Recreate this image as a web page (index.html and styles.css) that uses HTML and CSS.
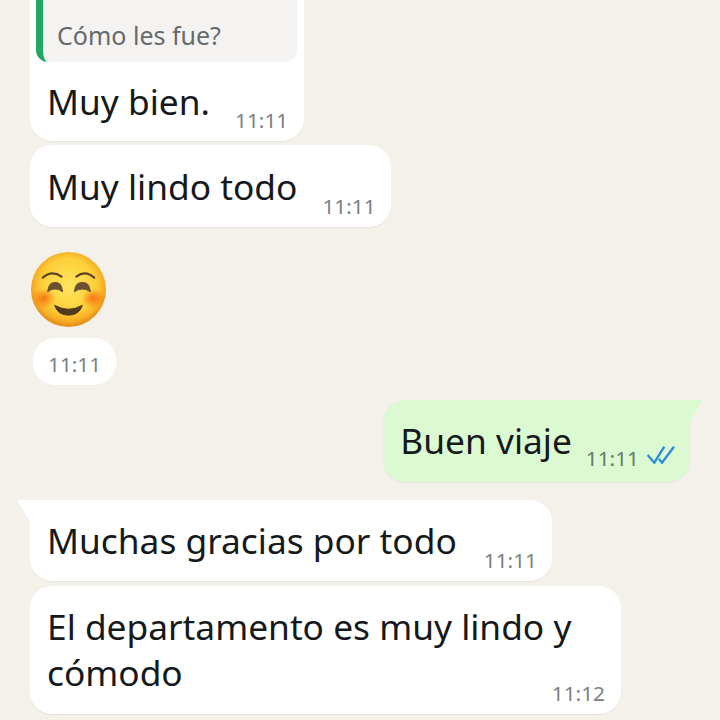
FILE: index.html
```html
<!DOCTYPE html>
<html lang="es">
<head>
  <meta charset="UTF-8">
  <title>Chat</title>
  <link rel="stylesheet" href="styles.css">
</head>
<body>

<div class="chat">

  <div class="msg in first">
    <div class="reply"><span class="reply-text">Cómo les fue?</span></div>
    <div class="row">
      <span class="text">Muy bien.</span>
      <span class="time">11:11</span>
    </div>
  </div>

  <div class="msg in next">
    <div class="row">
      <span class="text">Muy lindo todo</span>
      <span class="time">11:11</span>
    </div>
  </div>

  <svg class="emoji" width="77" height="77" viewBox="0 0 78 78">
    <defs>
      <radialGradient id="face" cx="50%" cy="45%" r="52%">
        <stop offset="0" stop-color="#ffe65e"/>
        <stop offset="0.7" stop-color="#fdcf38"/>
        <stop offset="0.92" stop-color="#f7ab24"/>
        <stop offset="1" stop-color="#e8941e"/>
      </radialGradient>
      <radialGradient id="blush">
        <stop offset="0" stop-color="#f8690f" stop-opacity="0.9"/>
        <stop offset="1" stop-color="#f8690f" stop-opacity="0"/>
      </radialGradient>
    </defs>
    <circle cx="39" cy="39" r="38" fill="url(#face)"/>
    <ellipse cx="14" cy="48" rx="12" ry="10" fill="url(#blush)"/>
    <ellipse cx="64" cy="48" rx="12" ry="10" fill="url(#blush)"/>
    <path d="M13 27 Q22 19 32 26" fill="none" stroke="#5c4326" stroke-width="2.2" stroke-linecap="round"/>
    <path d="M47 26 Q56 19 65 27" fill="none" stroke="#5c4326" stroke-width="2.2" stroke-linecap="round"/>
    <path d="M18 41 Q19 32 25.500 32 Q32 32 33 41 Q25.500 36 18 41Z" fill="#6a5233" stroke="#6a5233" stroke-width="1.2" stroke-linejoin="round"/>
    <path d="M45 41 Q46 32 53 32 Q60 32 61 41 Q53 36 45 41Z" fill="#6a5233" stroke="#6a5233" stroke-width="1.2" stroke-linejoin="round"/>
    <path d="M25 55 Q39 63 53 55 Q50 65 39 65 Q28 65 25 55Z" fill="#4f3a1c" stroke="#4f3a1c" stroke-linejoin="round"/>
  </svg>

  <div class="stamp">11:11</div>

  <div class="msg out">
    <div class="row">
      <span class="text">Buen viaje</span>
      <span class="time">11:11</span>
      <svg class="ticks" width="28" height="18" viewBox="0 0 28 18">
        <path d="M0.700 9 L7.300 16.700 L17.300 0.700" fill="none" stroke="#2f8ed8" stroke-width="2.400"/>
        <path d="M12 13 L15 16.700 L27 0.700" fill="none" stroke="#2f8ed8" stroke-width="2.400"/>
      </svg>
    </div>
  </div>

  <div class="msg in tail">
    <div class="row">
      <span class="text">Muchas gracias por todo</span>
      <span class="time">11:11</span>
    </div>
  </div>

  <div class="msg in next wide">
    <div class="text">El departamento es muy lindo y</div>
    <div class="row">
      <span class="text">cómodo</span>
      <span class="time">11:12</span>
    </div>
  </div>

</div>

</body>
</html>
```

FILE: styles.css
```css
html, body { margin: 0; height: 100%; }
body {
  background: #f4f1eb;
  font-family: "Noto Sans", "Open Sans", sans-serif;
  color: #15191b;
  overflow: hidden;
}

.chat {
  height: 720px;
  box-sizing: border-box;
  padding: 0 30px 6px;
  display: flex;
  flex-direction: column;
  justify-content: flex-end;
  align-items: flex-start;
  overflow: hidden;
}

.msg {
  position: relative;
  box-sizing: border-box;
  background: #fff;
  border-radius: 22px;
  padding: 18px 15px 8px 17px;
  box-shadow: 0 1px 1px rgba(0,0,0,0.06);
  flex-shrink: 0;
}

.row { display: flex; align-items: flex-end; }

.text { font-size: 35.300px; line-height: 46px; }
.row .text { padding-bottom: 10px; }

.time {
  font-size: 20.800px;
  line-height: 26px;
  color: #7b8083;
  margin-left: 25px;
  white-space: nowrap;
}

.first { padding: 6px 6px 8px; }
.first .row { padding: 0 10px 0 11px; margin-top: 16px; }
.first .row .text { padding-bottom: 9px; }

.reply {
  box-sizing: border-box;
  height: 110px;
  width: 261px;
  padding: 0 0 10px 14px;
  display: flex;
  align-items: flex-end;
  background: #f4f3f1;
  border-left: 7px solid #21a665;
  border-radius: 12px;
}
.reply-text { font-size: 25px; line-height: 34px; color: #666a6c; }

.next { margin-top: 4px; }

.emoji { display: block; margin-top: 24px; flex-shrink: 0; }

.stamp {
  margin: 10px 0 0 3px;
  padding: 0 15px;
  height: 47px;
  line-height: 52px;
  background: #fff;
  border-radius: 22px;
  font-size: 20.800px;
  color: #7b8083;
  flex-shrink: 0;
}

.out {
  align-self: flex-end;
  margin-top: 15px;
  padding-top: 17px;
  background: #dcfad2;
  border-radius: 22px 0 22px 22px;
}
.out .row .text { padding-bottom: 11px; }
.out .time { color: #66796a; margin: 0 0 3px 14px; }
.out .ticks { margin: 0 0 10px 8px; flex-shrink: 0; }
.out::after {
  content: "";
  position: absolute;
  top: 0;
  right: -12px;
  width: 12px;
  height: 22px;
  background: #dcfad2;
  clip-path: polygon(0 0, 100% 0, 0 100%);
}

.tail {
  margin-top: 18px;
  padding-top: 17px;
  border-top-left-radius: 0;
}
.tail .time { margin-left: 27px; }
.tail::before {
  content: "";
  position: absolute;
  top: 0;
  left: -13px;
  width: 13px;
  height: 22px;
  background: #fff;
  clip-path: polygon(0 0, 100% 0, 100% 100%);
}

.wide { width: 591px; margin-top: 5px; padding: 17px 16px 8px 17px; }
.wide .row { justify-content: space-between; }
.wide .row .text { padding-bottom: 11px; }
```
